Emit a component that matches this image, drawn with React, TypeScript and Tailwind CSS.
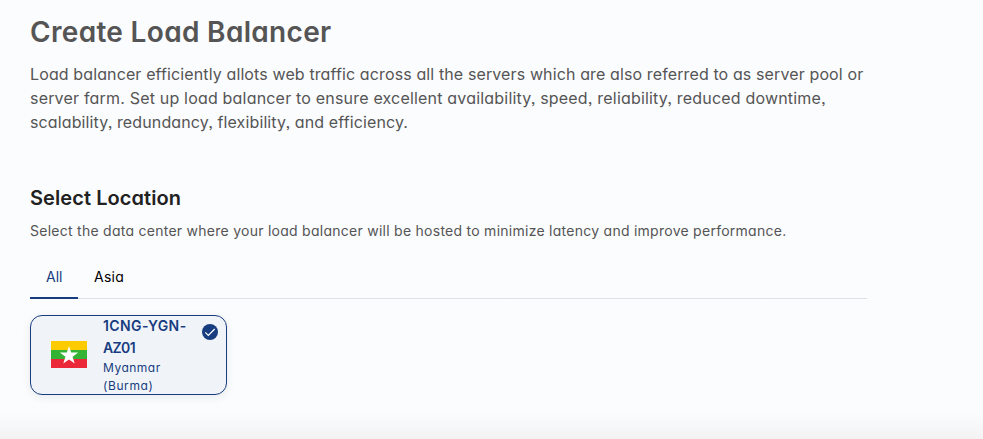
import React from "react";

function Flag() {
  return (
    <svg width="36" height="27" viewBox="0 0 36 27" className="mb-px shrink-0">
      <rect width="36" height="9" fill="#fecb00" />
      <rect y="9" width="36" height="9" fill="#34b233" />
      <rect y="18" width="36" height="9" fill="#ea2839" />
      <path
        fill="#fff"
        d="M18 4.9l2.2 6.6h7l-5.6 4.2 2.1 6.8-5.7-4.1-5.7 4.1 2.1-6.8-5.6-4.2h7z"
      />
    </svg>
  );
}

function CheckBadge() {
  return (
    <svg width="16" height="16" viewBox="0 0 16 16" className="absolute top-2 right-2">
      <circle cx="8" cy="8" r="8" fill="#173c80" />
      <path d="M3.3 8.4l3 3 6.4-6.4" fill="none" stroke="#fff" strokeWidth="1.2" />
    </svg>
  );
}

export default function App() {
  return (
    <main className="h-[439px] overflow-hidden bg-linear-to-b from-[#fbfcfe] from-[94%] to-[#f3f3f4] pl-[30px] font-['Inter',sans-serif] [font-feature-settings:'cv11','ss03'] whitespace-nowrap text-[#555555]">
      <div className="w-[837px]">
        <h1 className="pt-3 text-[28px] leading-10 font-semibold tracking-[0.32px]">Create Load Balancer</h1>
        <p className="pt-2.5 text-base leading-6">
          <span className="block tracking-[0.12px]">Load balancer efficiently allots web traffic across all the servers which are also referred to as server pool or</span>
          <span className="block tracking-[0.19px]">server farm. Set up load balancer to ensure excellent availability, speed, reliability, reduced downtime,</span>
          <span className="block tracking-[0.12px]">scalability, redundancy, flexibility, and efficiency.</span>
        </p>
        <h2 className="pt-[49px] text-xl leading-[30px] font-semibold tracking-[0.07px] text-[#212121]">Select Location</h2>
        <p className="pt-2 text-sm leading-5 tracking-[0.262px]">
          Select the data center where your load balancer will be hosted to minimize latency and improve performance.
        </p>
        <div className="mt-4 flex h-[42px] border-b border-[#dee2e6] text-sm leading-5">
          <div className="-mb-px w-12 border-b-2 border-[#173c80] pt-2.5 pl-4 text-[#173c80]">All</div>
          <div className="pt-2.5 pl-4 tracking-[0.25px] text-black">Asia</div>
        </div>
        <div className="relative mt-4 flex h-20 w-[197px] items-center rounded-xl border border-[#173c80] bg-[#f0f4f9] pl-5 text-[#173c80] shadow-[0_2px_10px_rgba(0,0,0,0.08)]">
          <Flag />
          <div className="pl-4">
            <div className="text-sm leading-[22px] font-semibold">
              <span className="block tracking-[0.4px]">1CNG-YGN-</span>
              <span className="block tracking-[-0.6px]">AZ01</span>
            </div>
            <div className="text-xs leading-[18px]">
              <span className="block tracking-[0.5px]">Myanmar</span>
              <span className="block tracking-[0.6px]">(Burma)</span>
            </div>
          </div>
          <CheckBadge />
        </div>
      </div>
    </main>
  );
}
